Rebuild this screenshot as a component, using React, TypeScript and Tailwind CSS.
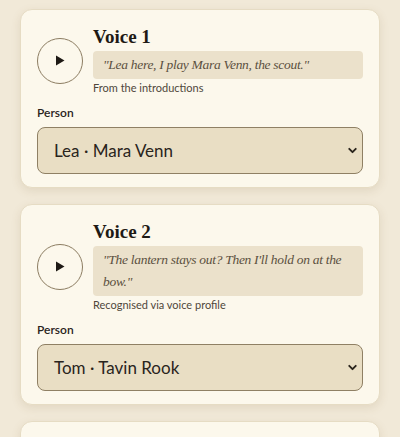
import { ChevronDown } from "lucide-react";

type Voice = {
  title: string;
  quote: string;
  source: string;
  person: string;
};

const voices: Voice[] = [
  {
    title: "Voice 1",
    quote: "\"Lea here, I play Mara Venn, the scout.\"",
    source: "From the introductions",
    person: "Lea · Mara Venn",
  },
  {
    title: "Voice 2",
    quote: "\"The lantern stays out? Then I'll hold on at the bow.\"",
    source: "Recognised via voice profile",
    person: "Tom · Tavin Rook",
  },
  {
    title: "Voice 3",
    quote: "\"Keep the fire low tonight.\"",
    source: "From the introductions",
    person: "Ada · Wren",
  },
];

const serif = "font-['Liberation_Serif',serif]";
const sans = "font-['Lato','Open_Sans',sans-serif]";

function PlayButton() {
  return (
    <button className="w-[46px] h-[46px] shrink-0 rounded-full border border-[#8c7d62] flex items-center justify-center">
      <svg width="10" height="11" viewBox="0 0 10 11">
        <path d="M1 0.5 L9.5 5.5 L1 10.5 Z" fill="#1e1a15" />
      </svg>
    </button>
  );
}

function VoiceCard({ voice }: { voice: Voice }) {
  return (
    <div className="bg-[#fcf8ec] border border-[#e6dcc4] rounded-xl px-4 pt-[15px] pb-[13px] shadow-[0_3px_10px_rgba(120,95,50,0.13)]">
      <div className="flex items-center gap-[10px]">
        <PlayButton />
        <div className="flex-1 min-w-0">
          <h2 className={`${serif} font-bold text-[19px] leading-[24px] text-[#1e1a15] mb-[2px]`}>
            {voice.title}
          </h2>
          <div className={`${serif} italic text-[13.5px] leading-[22px] tracking-[-0.3px] text-[#5b5040] bg-[#ebe1cb] rounded-[4px] pl-[10px] pr-[6px] py-[3px]`}>
            {voice.quote}
          </div>
          <div className={`${sans} text-[11px] leading-[16px] text-[#4f473b] mt-px`}>
            {voice.source}
          </div>
        </div>
      </div>
      <div className={`${sans} font-semibold text-[12px] leading-[16px] text-[#2a241c] mt-[9px] mb-[6px]`}>
        Person
      </div>
      <div className="h-[47px] bg-[#e9dec4] border border-[#8f8064] rounded-lg flex items-center justify-between pl-4 pr-[3px]">
        <span className={`${sans} text-[17px] text-[#2a241c]`}>{voice.person}</span>
        <ChevronDown size={13} strokeWidth={3.5} className="text-[#2a241c]" />
      </div>
    </div>
  );
}

export default function App() {
  return (
    <div className="min-h-screen bg-[#f1e9d8] px-5 pt-[9px] pb-6 flex flex-col gap-4">
      {voices.map((v) => (
        <VoiceCard key={v.title} voice={v} />
      ))}
    </div>
  );
}
